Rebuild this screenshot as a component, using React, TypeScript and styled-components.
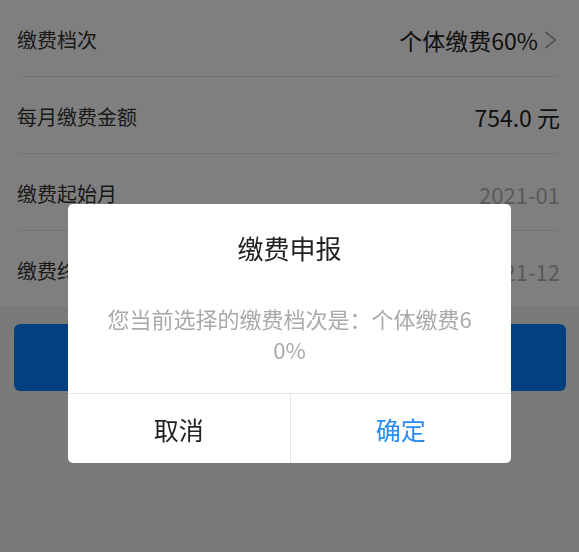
import React from 'react';
import styled, { createGlobalStyle } from 'styled-components';

const GlobalStyle = createGlobalStyle`
  html, body {
    margin: 0;
    padding: 0;
    background-color: #f4f4f4;
    font-family: "Noto Sans CJK SC", "Noto Sans", sans-serif;
  }
`;

type Item = { label: string; value: string; kind: 'link' | 'strong' | 'muted' };

const items: Item[] = [
  { label: '缴费档次', value: '个体缴费60%', kind: 'link' },
  { label: '每月缴费金额', value: '754.0 元', kind: 'strong' },
  { label: '缴费起始月', value: '2021-01', kind: 'muted' },
  { label: '缴费终止月', value: '2021-12', kind: 'muted' },
];

const Chevron: React.FC = () => (
  <svg width="13" height="18" viewBox="0 0 13 18">
    <polyline points="1.5,1 11.5,9 1.5,17" fill="none" stroke="#a8a8a8" strokeWidth="1.8" />
  </svg>
);

export default function App() {
  return (
    <>
      <GlobalStyle />
      <StyledPage>
        <StyledList>
          {items.map((item, i) => (
            <React.Fragment key={item.label}>
              <StyledRow>
                <StyledLabel>{item.label}</StyledLabel>
                <StyledValue kind={item.kind}>
                  {item.value}
                  {item.kind === 'link' && <Chevron />}
                </StyledValue>
              </StyledRow>
              {i < items.length - 1 && <StyledDivider />}
            </React.Fragment>
          ))}
        </StyledList>
        <StyledSubmit aria-label="确认缴费" />
      </StyledPage>

      <StyledMask>
        <StyledDialog>
          <StyledTitle>缴费申报</StyledTitle>
          <StyledMessage>您当前选择的缴费档次是：个体缴费60%</StyledMessage>
          <StyledActions>
            <StyledAction>取消</StyledAction>
            <StyledAction primary>确定</StyledAction>
          </StyledActions>
        </StyledDialog>
      </StyledMask>
    </>
  );
}

const StyledPage = styled.div`
  min-height: 552px;
  display: flex;
  flex-direction: column;
`;

const StyledList = styled.div`
  background-color: #fff;
  border-bottom: 1px solid #ececec;
`;

const StyledRow = styled.div`
  height: 76px;
  padding: 3px 19px 0 17px;
  box-sizing: border-box;
  display: flex;
  align-items: center;
  justify-content: space-between;
`;

const StyledDivider = styled.div`
  height: 1px;
  margin: 0 22px 0 20px;
  background-color: #e6e6e6;
`;

const StyledLabel = styled.span`
  font-size: 20px;
  color: #333;
`;

const StyledValue = styled.span<{ kind: 'link' | 'strong' | 'muted' }>`
  display: flex;
  align-items: center;
  gap: 6px;
  font-size: ${p => (p.kind === 'muted' ? '22px' : '23px')};
  color: ${p => (p.kind === 'muted' ? '#b3b3b3' : '#222')};
  margin-right: ${p => (p.kind === 'link' ? '3px' : '0')};
`;

const StyledSubmit = styled.button`
  margin: 16px 13px 0 14px;
  height: 67px;
  border: none;
  border-radius: 6px;
  background-color: #0480ff;
`;

const StyledMask = styled.div`
  position: fixed;
  inset: 0;
  background-color: rgba(0, 0, 0, 0.5);
  display: flex;
  justify-content: center;
  align-items: flex-start;
  padding-top: 204px;
  box-sizing: border-box;
`;

const StyledDialog = styled.div`
  width: 443px;
  background-color: #fff;
  border-radius: 5px;
  overflow: hidden;
  display: flex;
  flex-direction: column;
`;

const StyledTitle = styled.div`
  padding-top: 27px;
  font-size: 26px;
  line-height: 34px;
  color: #222;
  text-align: center;
`;

const StyledMessage = styled.div`
  margin-top: 38px;
  padding: 0 35px 28px;
  font-size: 22px;
  line-height: 31px;
  color: #aaa;
  text-align: center;
  word-break: break-all;
`;

const StyledActions = styled.div`
  display: grid;
  grid-template-columns: 1fr 1fr;
  border-top: 1px solid #e5e5e5;
  height: 69px;
`;

const StyledAction = styled.div<{ primary?: boolean }>`
  display: flex;
  align-items: center;
  justify-content: center;
  font-size: 25px;
  color: ${p => (p.primary ? '#2a8cf2' : '#222')};
  border-left: ${p => (p.primary ? '1px solid #e5e5e5' : 'none')};
`;
